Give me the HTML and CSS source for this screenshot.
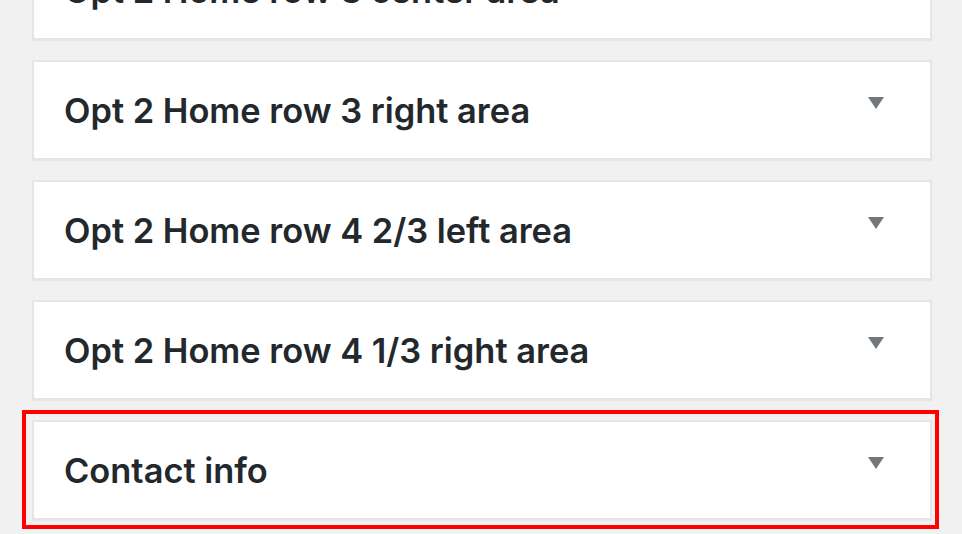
FILE: index.html
```html
<!DOCTYPE html>
<html lang="en">
<head>
    <meta charset="UTF-8">
    <title>Widgets</title>
    <link rel="stylesheet" href="styles.css">
</head>
<body>
    <div class="widgets">
        <div class="widget">
            <h3>Opt 2 Home row 3 center area</h3>
            <svg class="toggle" width="16" height="12" viewBox="0 0 16 12"><path d="M0 0h16L8 12z"/></svg>
        </div>
        <div class="widget">
            <h3>Opt 2 Home row 3 right area</h3>
            <svg class="toggle" width="16" height="12" viewBox="0 0 16 12"><path d="M0 0h16L8 12z"/></svg>
        </div>
        <div class="widget">
            <h3>Opt 2 Home row 4 2/3 left area</h3>
            <svg class="toggle" width="16" height="12" viewBox="0 0 16 12"><path d="M0 0h16L8 12z"/></svg>
        </div>
        <div class="widget">
            <h3>Opt 2 Home row 4 1/3 right area</h3>
            <svg class="toggle" width="16" height="12" viewBox="0 0 16 12"><path d="M0 0h16L8 12z"/></svg>
        </div>
        <div class="highlight">
            <div class="widget">
                <h3>Contact info</h3>
                <svg class="toggle" width="16" height="12" viewBox="0 0 16 12"><path d="M0 0h16L8 12z"/></svg>
            </div>
        </div>
    </div>
</body>
</html>
```

FILE: styles.css
```css
body {
    margin: 0;
    background: #f1f1f1;
    font-family: Inter, "Liberation Sans", sans-serif;
    overflow: hidden;
}
.widgets {
    display: flex;
    flex-direction: column;
    gap: 20px;
    width: 900px;
    margin-top: -60px;
    margin-left: 32px;
}
.widget {
    display: flex;
    align-items: center;
    height: 96px;
    background: #fff;
    border: 2px solid #e5e5e5;
    box-shadow: 0 1px 1px rgba(0, 0, 0, .04);
}
.widget h3 {
    flex: 1;
    margin: 0;
    padding-left: 30px;
    font-size: 34.4px;
    font-weight: 600;
    color: #23282d;
}
.toggle {
    align-self: flex-start;
    margin-top: 35px;
    margin-right: 46px;
    fill: #72777c;
}
.highlight {
    margin: -10px -7px 0 -10px;
    padding: 6px 3px 5px 6px;
    border: 4px solid #f00;
}
```
